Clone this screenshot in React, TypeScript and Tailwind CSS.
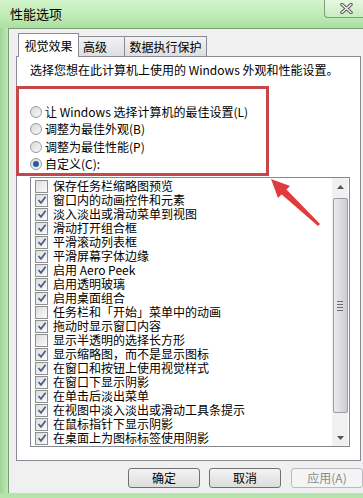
import React from "react";

const FONT = { fontFamily: '"Noto Sans CJK SC", "Noto Sans", sans-serif' };

const items: [string, boolean][] = [
  ["保存任务栏缩略图预览", false],
  ["窗口内的动画控件和元素", true],
  ["淡入淡出或滑动菜单到视图", true],
  ["滑动打开组合框", true],
  ["平滑滚动列表框", true],
  ["平滑屏幕字体边缘", true],
  ["启用 Aero Peek", true],
  ["启用透明玻璃", true],
  ["启用桌面组合", true],
  ["任务栏和「开始」菜单中的动画", false],
  ["拖动时显示窗口内容", true],
  ["显示半透明的选择长方形", false],
  ["显示缩略图，而不是显示图标", true],
  ["在窗口和按钮上使用视觉样式", true],
  ["在窗口下显示阴影", true],
  ["在单击后淡出菜单", true],
  ["在视图中淡入淡出或滑动工具条提示", true],
  ["在鼠标指针下显示阴影", true],
  ["在桌面上为图标标签使用阴影", true],
];

const radios = [
  "让 Windows 选择计算机的最佳设置(L)",
  "调整为最佳外观(B)",
  "调整为最佳性能(P)",
  "自定义(C):",
];

function Check({ on }: { on: boolean }) {
  return (
    <div className="w-[13px] h-[13px] border border-[#8f8f8f] bg-gradient-to-br from-[#dcdcdc] to-[#fbfbfb] flex items-center justify-center shrink-0">
      {on && (
        <svg width="10" height="10" viewBox="0 0 10 10">
          <path d="M1.5 5 L4 7.8 L8.6 1.8" fill="none" stroke="#4a5f86" strokeWidth="1.8" />
        </svg>
      )}
    </div>
  );
}

function Radio({ on }: { on: boolean }) {
  return (
    <div className="w-[12px] h-[12px] rounded-full border border-[#9a9a9a] bg-gradient-to-br from-[#d8d8d8] to-[#fafafa] flex items-center justify-center shrink-0">
      {on && <div className="w-[6px] h-[6px] rounded-full bg-[#2a5aa8]" />}
    </div>
  );
}

function Btn({ label, disabled }: { label: string; disabled?: boolean }) {
  return (
    <div
      className={
        disabled
          ? "w-[72px] h-[20px] shrink-0 rounded-[3px] border border-[#b8bcc0] bg-[#f4f4f4] text-[#8a8a8a] flex items-center justify-center text-[12px]"
          : "w-[72px] h-[20px] shrink-0 rounded-[3px] border border-[#707070] bg-gradient-to-b from-[#f4f4f4] to-[#dcdcdc] text-black flex items-center justify-center text-[12px]"
      }
    >
      {label}
    </div>
  );
}

export default function App() {
  return (
    <div className="w-[363px] h-[498px] overflow-hidden relative bg-[#b3e4aa] flex flex-col text-black" style={FONT}>
      {/* title bar */}
      <div className="h-[28px] flex items-start bg-gradient-to-b from-[#d2f4cb] via-[#c2edb9] to-[#a9e0a0] shrink-0">
        <span className="mt-[6px] ml-[10px] text-[13px] leading-[16px]">性能选项</span>
        <div className="ml-auto mr-[-4px] w-[43px] h-[18px] rounded-bl-[4px] border-l border-b border-[#7f9f7a] bg-gradient-to-b from-[#e6f8e2] to-[#c9ecc2] flex items-center justify-center">
          <svg width="13" height="11" viewBox="0 0 13 11">
            <path d="M2 1.5 L11 9.5 M11 1.5 L2 9.5" stroke="#5b5b5b" strokeWidth="3.4" strokeLinecap="round" />
            <path d="M2 1.5 L11 9.5 M11 1.5 L2 9.5" stroke="#f4f4f4" strokeWidth="1.4" strokeLinecap="round" />
          </svg>
        </div>
      </div>

      <div className="flex">
        <div className="w-[8px] shrink-0 bg-gradient-to-r from-[#9fd497] to-[#bfe9b6]" />
        {/* client area */}
        <div className="flex-1 h-[465px] bg-[#f0f0f0] border-l border-t border-[#7c9a78] pl-[7px] pt-[4px] flex flex-col">
          {/* tabs */}
          <div className="h-[23px] flex items-end text-[12px]">
            <div className="relative z-10 -mb-px ml-[2px] w-[61px] h-[24px] bg-white border border-b-0 border-[#898c95] flex items-center justify-center">
              视觉效果
            </div>
            <div className="w-[46px] h-[20px] bg-gradient-to-b from-[#f3f3f3] to-[#dedede] border border-l-0 border-b-0 border-[#898c95] flex items-center pl-[4px]">
              高级
            </div>
            <div className="w-[82px] h-[20px] bg-gradient-to-b from-[#f3f3f3] to-[#dedede] border border-l-0 border-b-0 border-[#898c95] flex items-center justify-center">
              数据执行保护
            </div>
          </div>

          {/* panel */}
          <div className="w-[345px] h-[405px] shrink-0 bg-white border border-[#898c95] pl-[13px] pt-[6px] flex flex-col">
            <div className="text-[12px] leading-[14px] whitespace-nowrap">
              选择您想在此计算机上使用的 Windows 外观和性能设置。
            </div>
            <div className="mt-[26px] flex flex-col">
              {radios.map((r, i) => (
                <div key={r} className="h-[17.5px] flex items-center gap-[3px] text-[12px] whitespace-nowrap">
                  <Radio on={i === 3} />
                  <span>{r}</span>
                </div>
              ))}
            </div>

            {/* list box */}
            <div className="mt-[4px] w-[320px] h-[270px] border border-[#828790] flex">
              <div className="flex-1 overflow-hidden pt-[1px] pl-[4px]">
                {items.map(([t, on]) => (
                  <div key={t} className="h-[14px] flex items-center gap-[5px] text-[12px] leading-[14px] whitespace-nowrap">
                    <Check on={on} />
                    <span>{t}</span>
                  </div>
                ))}
              </div>
              <div className="w-[16px] mr-px bg-[#f0f0f0] flex flex-col items-center">
                <div className="h-[17px] flex items-center justify-center">
                  <svg width="7" height="4" viewBox="0 0 7 4">
                    <path d="M0 4 L3.5 0 L7 4 Z" fill="#555" />
                  </svg>
                </div>
                <div className="mt-[3px] w-[15px] h-[215px] rounded-[2px] border border-[#9a9ea6] bg-gradient-to-r from-[#eaeaea] via-[#dcdde0] to-[#c9cbd0] flex flex-col items-center justify-center gap-[2px]">
                  <div className="w-[6px] h-px bg-[#6d6d6d]" />
                  <div className="w-[6px] h-px bg-[#6d6d6d]" />
                  <div className="w-[6px] h-px bg-[#6d6d6d]" />
                  <div className="w-[6px] h-px bg-[#6d6d6d]" />
                </div>
                <div className="mt-auto h-[17px] flex items-center justify-center">
                  <svg width="7" height="4" viewBox="0 0 7 4">
                    <path d="M0 0 L7 0 L3.5 4 Z" fill="#555" />
                  </svg>
                </div>
              </div>
            </div>
          </div>

          {/* buttons */}
          <div className="mt-[7px] ml-[112px] flex gap-[9px]">
            <Btn label="确定" />
            <Btn label="取消" />
            <div className="ml-px">
              <Btn label="应用(A)" disabled />
            </div>
          </div>
        </div>
      </div>

      {/* annotation: red box */}
      <div className="absolute left-[16px] top-[86px] w-[253px] h-[90px] border-[3px] border-[#c4474a] pointer-events-none" />
      {/* annotation: red arrow */}
      <svg className="absolute left-0 top-0 pointer-events-none" width="363" height="498" viewBox="0 0 363 498">
        <polygon points="318,226 320,224 285,188 280,193" fill="#e23b3d" />
        <polygon points="271,179 290,186 278,198" fill="#e23b3d" />
      </svg>
    </div>
  );
}
